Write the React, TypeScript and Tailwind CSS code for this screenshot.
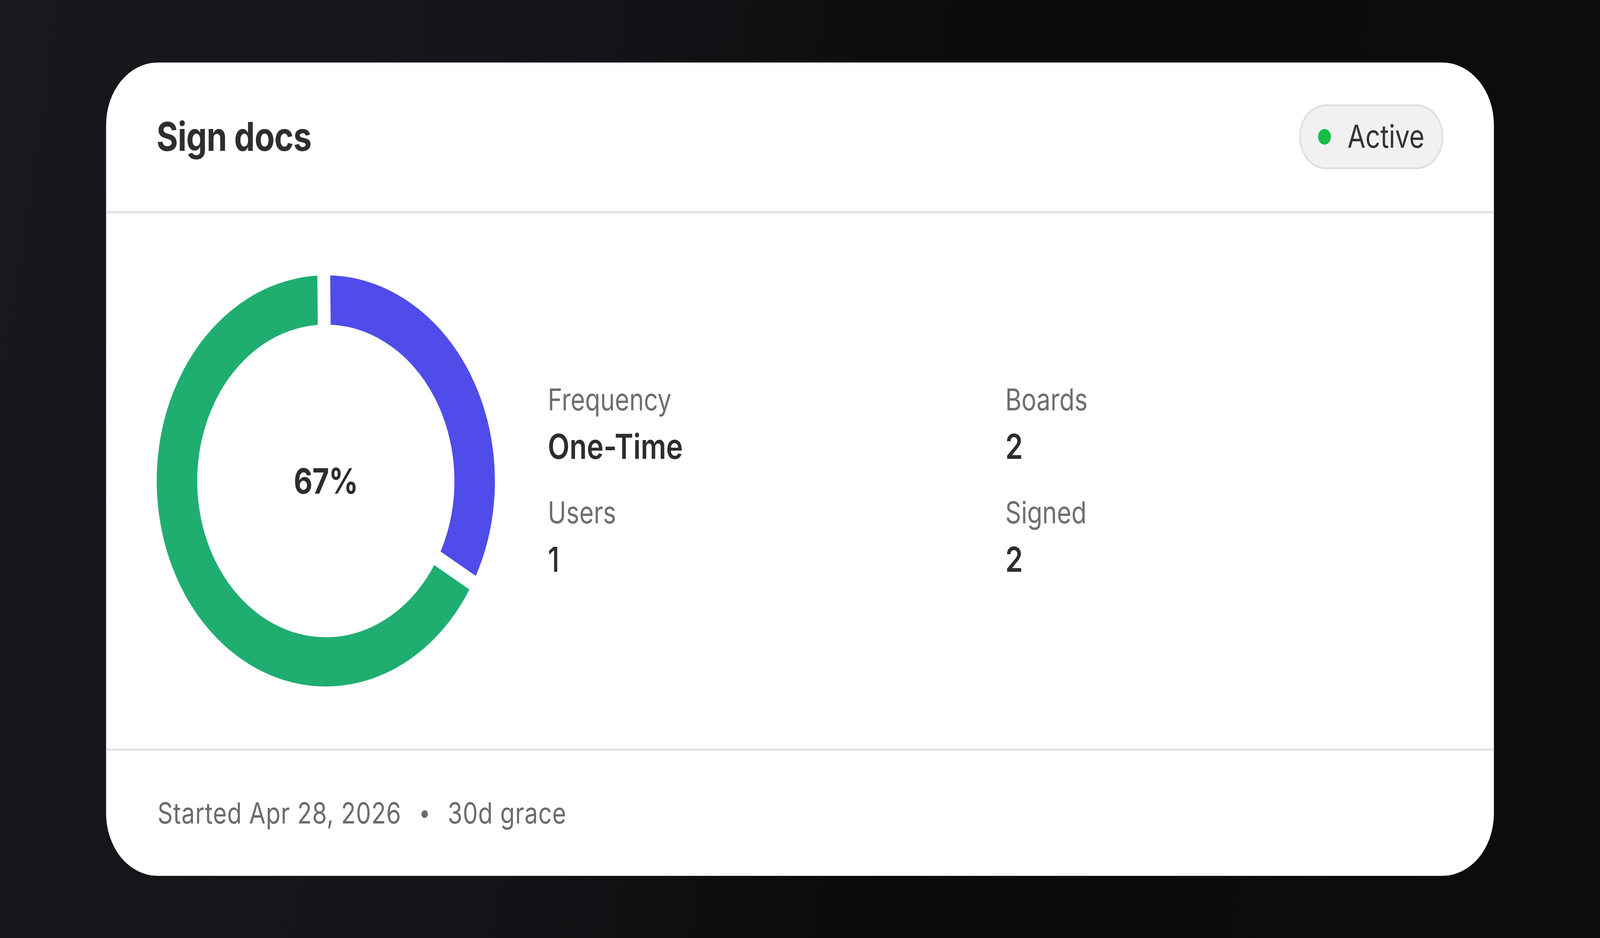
import React, { useLayoutEffect, useState } from "react";

const font = { fontFamily: "Inter, 'Liberation Sans', sans-serif" };

// the card is drawn on a 4977px wide board, fitted to the window width
const BOARD_W = 4977;

const R_MID = 463;
const STROKE = 126;
const SIZE = 1053;
const C = SIZE / 2;

// point on the ring, angle in degrees clockwise from 12 o'clock
const pt = (deg: number, r: number) => {
  const a = (deg * Math.PI) / 180;
  return [C + r * Math.sin(a), C - r * Math.cos(a)];
};

const arc = (from: number, to: number) => {
  const [x1, y1] = pt(from, R_MID);
  const [x2, y2] = pt(to, R_MID);
  const large = to - from > 180 ? 1 : 0;
  return `M ${x1} ${y1} A ${R_MID} ${R_MID} 0 ${large} 1 ${x2} ${y2}`;
};

const Donut = ({ percent }: { percent: number }) => {
  const split = 360 * (1 - percent / 100);
  const gaps = [-0.7, split + 0.9];
  return (
    <div className="relative w-[1053px] h-[1053px] shrink-0">
      <svg width={SIZE} height={SIZE} viewBox={`0 0 ${SIZE} ${SIZE}`}>
        <path d={arc(0, split)} fill="none" stroke="#4f4ce9" strokeWidth={STROKE} />
        <path d={arc(split, 360)} fill="none" stroke="#1fae6f" strokeWidth={STROKE} />
        {gaps.map((g) => {
          const [x, y] = pt(g, C + 10);
          return <line key={g} x1={C} y1={C} x2={x} y2={y} stroke="#ffffff" strokeWidth={40} />;
        })}
      </svg>
      <div className="absolute inset-0 flex items-center justify-center">
        <span className="text-[90px] font-bold text-[#2d2d2d] tracking-[-1px]">{percent}%</span>
      </div>
    </div>
  );
};

const Stat = ({ label, value, bold }: { label: string; value: string; bold?: boolean }) => (
  <div className="flex flex-col gap-[17px]">
    <span className="text-[77px] leading-[96px] text-[#6e6e6e]">{label}</span>
    <span
      className={`text-[88px] leading-[110px] text-[#2d2d2d] ${bold ? "font-semibold" : "font-medium"}`}
    >
      {value}
    </span>
  </div>
);

export default function App() {
  const [sx, setSx] = useState(1);

  useLayoutEffect(() => {
    const fit = () => setSx(window.innerWidth / BOARD_W);
    fit();
    window.addEventListener("resize", fit);
    return () => window.removeEventListener("resize", fit);
  }, []);

  return (
    <div className="w-screen h-screen overflow-hidden bg-[#0c0c0d]">
      <div
        className="w-[4977px] h-screen origin-top-left flex items-center justify-center bg-[linear-gradient(100deg,#18191d_0%,#131417_35%,#0a0a0b_58%,#0d0d0e_100%)]"
        style={{ ...font, transform: `scaleX(${sx})` }}
      >
        <div className="w-[4317px] bg-white rounded-[160px] overflow-hidden flex flex-col">
          {/* Header */}
          <div className="h-[386px] px-[157px] flex items-center justify-between border-b-[6px] border-[#e3e3e3]">
            <h2 className="text-[102px] font-bold text-[#2e2e2e] tracking-[-1px]">Sign docs</h2>
            <div className="inline-flex items-center h-[166px] pl-[54px] pr-[54px] gap-[52px] rounded-full border-[5px] border-[#e0e0e0] bg-[#f1f1f1]">
              <span className="w-[40px] h-[40px] rounded-full bg-[#14bf45]" />
              <span className="text-[81px] text-[#333333]">Active</span>
            </div>
          </div>

          {/* Body */}
          <div className="h-[1375px] px-[157px] flex items-center gap-[164px] border-b-[6px] border-[#e3e3e3]">
            <Donut percent={67} />
            <div className="flex-1 grid grid-cols-[1423px_1fr] gap-y-[66px]">
              <Stat label="Frequency" value="One-Time" bold />
              <Stat label="Boards" value="2" bold />
              <Stat label="Users" value="1" />
              <Stat label="Signed" value="2" bold />
            </div>
          </div>

          {/* Footer */}
          <div className="h-[320px] px-[160px] flex items-center text-[74px] tracking-[1.2px] text-[#6b6b6b]">
            <span>Started Apr 28, 2026</span>
            <span className="w-[20px] h-[20px] rounded-full bg-[#6b6b6b] mx-[62px] mt-[4px]" />
            <span>30d grace</span>
          </div>
        </div>
      </div>
    </div>
  );
}
